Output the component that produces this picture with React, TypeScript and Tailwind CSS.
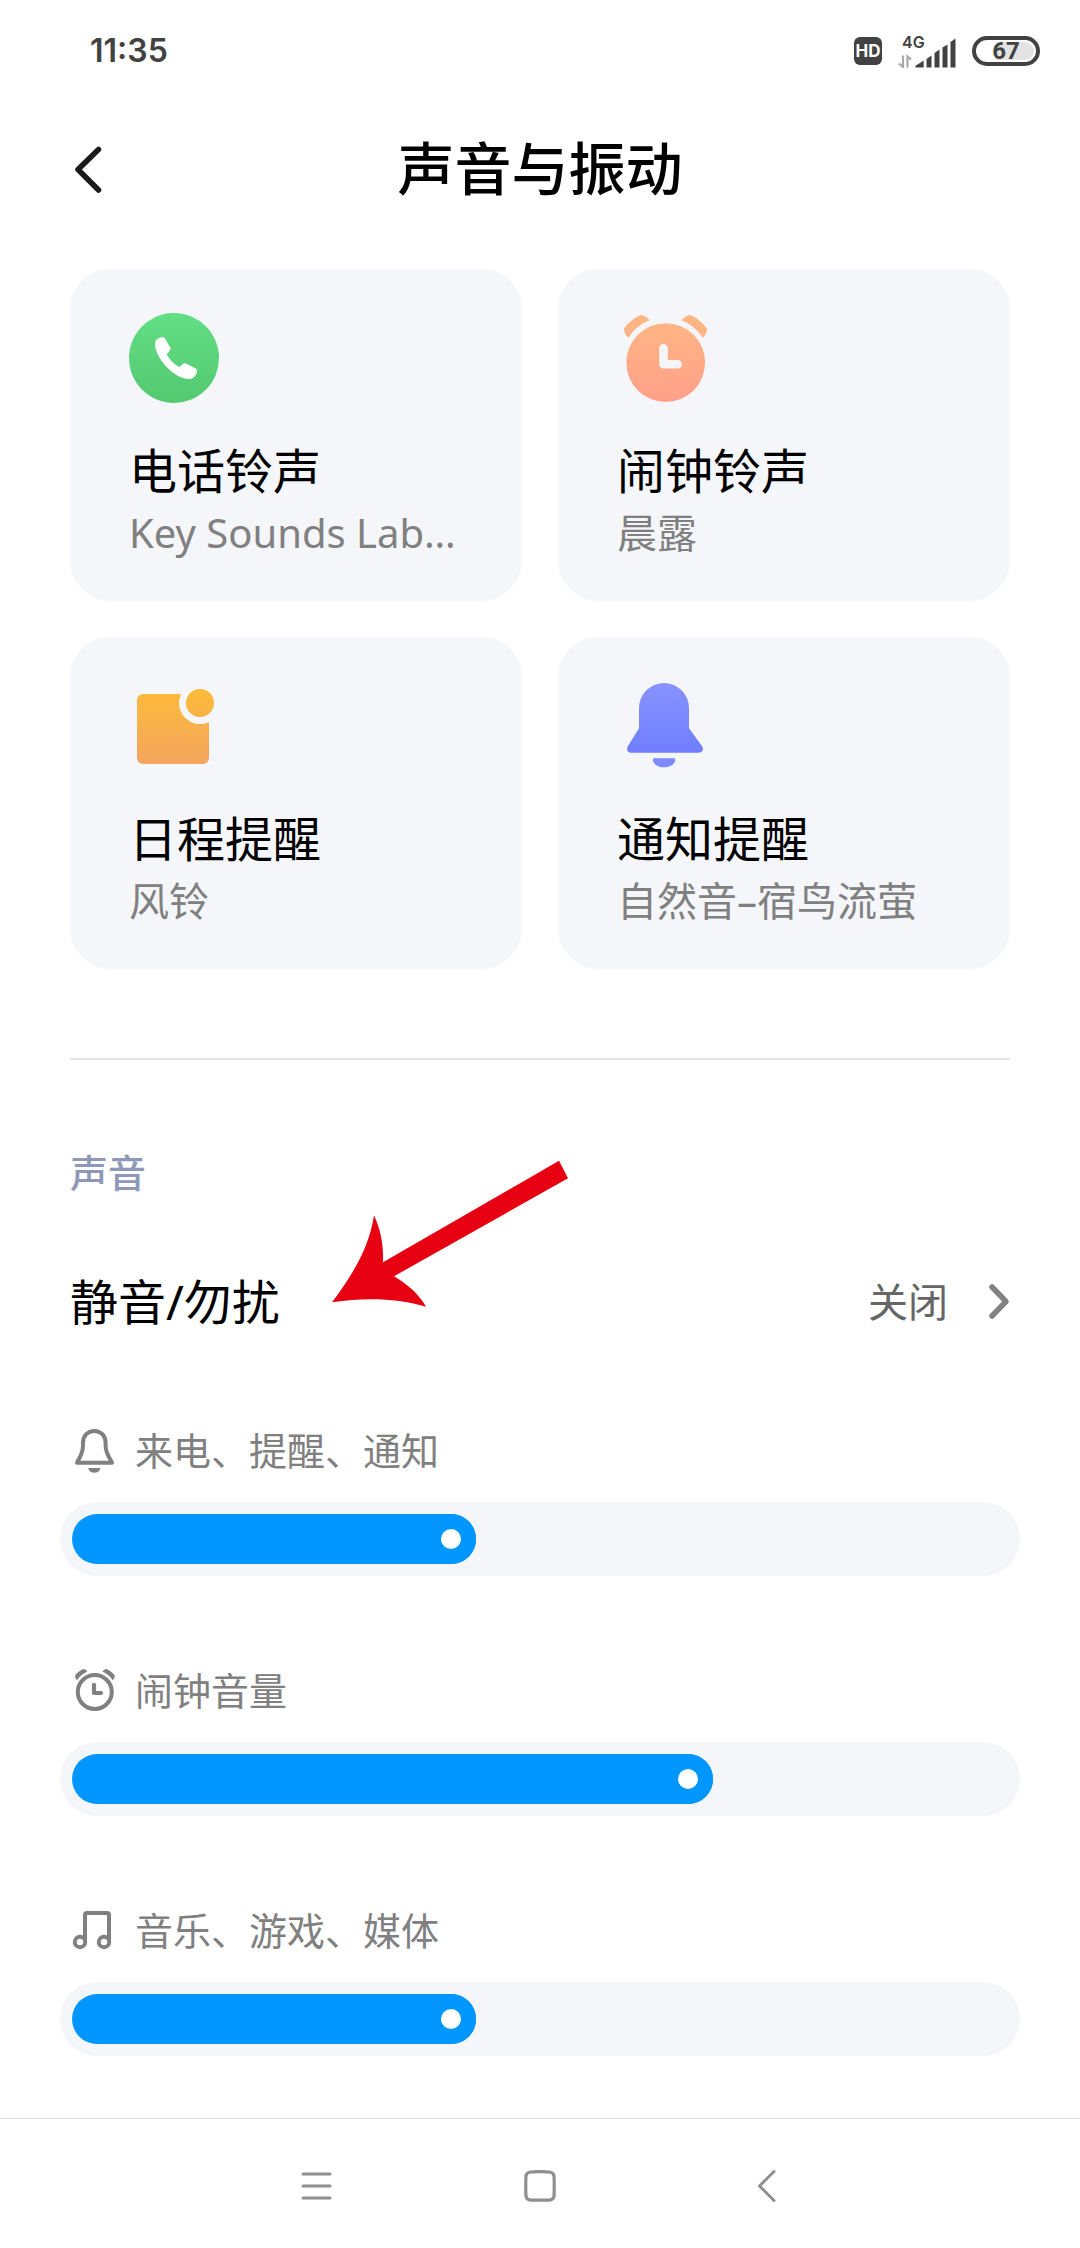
import { useState, type ReactNode } from "react";

function PhoneIcon() {
  return (
    <svg className="size-[90px]" viewBox="0 0 90 90" aria-hidden="true">
      <defs>
        <linearGradient id="phone" x1="0" y1="0" x2="0" y2="1">
          <stop offset="0" stopColor="#62de84" />
          <stop offset="1" stopColor="#54c970" />
        </linearGradient>
      </defs>
      <circle cx="45" cy="45" r="45" fill="url(#phone)" />
      <path
        d="M26 31C26 27 29 25.4 32 24.3Q34.8 23.3 36 25.5L41.3 34.5Q42 36 41 37.2L37.7 41.5C40.5 46.5 45.5 51.5 50.5 54L54.5 50.6Q55.7 49.8 57 50.4L66.5 55.3Q69 57 67.8 59.7C66.5 63 64 66 60 66C44 65.5 26 44 26 31Z"
        fill="#fff"
      />
    </svg>
  );
}

function AlarmIcon() {
  return (
    <svg className="size-[90px]" viewBox="0 0 90 90" aria-hidden="true">
      <defs>
        <linearGradient id="alarm" gradientUnits="userSpaceOnUse" x1="0" y1="2" x2="0" y2="89">
          <stop offset="0" stopColor="#ffb783" />
          <stop offset="1" stopColor="#ffa08a" />
        </linearGradient>
      </defs>
      <g fill="url(#alarm)">
        <circle cx="48.7" cy="49.6" r="39.4" />
        <path d="M7 15.5C11 10 17 5 22.5 2.4Q24.5 1.6 26.3 2.5C29 3.7 31 5.3 32.7 7.3C24 10.5 17 16 11.5 24.8C8.7 22.5 7 19 7 15.5Z" />
        <path d="M90 15.5C86 10 80 5 74.5 2.4Q72.5 1.6 70.7 2.5C68 3.7 66 5.3 64.3 7.3C73 10.5 80 16 85.5 24.8C88.3 22.5 90 19 90 15.5Z" />
      </g>
      <path d="M46.5 35.3V51.3H60.7" fill="none" stroke="#f5f6fa" strokeWidth="8.6" strokeLinecap="round" strokeLinejoin="round" />
    </svg>
  );
}

function CalendarIcon() {
  return (
    <svg className="size-[90px]" viewBox="0 0 90 90" aria-hidden="true">
      <defs>
        <linearGradient id="calendar" gradientUnits="userSpaceOnUse" x1="0" y1="8" x2="0" y2="83">
          <stop offset="0" stopColor="#fcbb38" />
          <stop offset="1" stopColor="#f4a560" />
        </linearGradient>
      </defs>
      <rect x="8" y="13" width="72" height="70" rx="6" fill="url(#calendar)" />
      <circle cx="71" cy="22" r="21" fill="#f5f6fa" />
      <circle cx="71" cy="22" r="14" fill="url(#calendar)" />
    </svg>
  );
}

function BellIcon() {
  return (
    <svg className="size-[90px]" viewBox="0 0 90 90" aria-hidden="true">
      <defs>
        <linearGradient id="bell" x1="0" y1="0" x2="0" y2="1">
          <stop offset="0" stopColor="#8893ff" />
          <stop offset="1" stopColor="#6f7eff" />
        </linearGradient>
      </defs>
      <path
        d="M22 27a25 25 0 0 1 50 0V47.3L85.3 65.5Q86.8 68 85.3 70.3Q84 71.7 82 71.7H14Q12 71.7 10.7 70.2Q9.4 68 10.7 65.5L22 47.3Z"
        fill="url(#bell)"
      />
      <path d="M37 77.3H57.3Q58.6 77.5 58.3 79.5C57.3 83.5 53 86.3 47 86.3C41 86.3 37 83.5 35.8 79.5Q35.5 77.5 37 77.3Z" fill="#7d8bff" />
    </svg>
  );
}

function SmallBellIcon() {
  return (
    <svg className="size-12" viewBox="0 0 48 48" aria-hidden="true">
      <path
        d="M13 15C13 7.5 18 3 24.3 3S35.6 7.5 35.6 15V17.5C35.6 25.5 39 28.5 42 34.7H7C10 28.5 13 25.5 13 17.5Z"
        fill="none"
        stroke="#808080"
        strokeWidth="4"
        strokeLinejoin="round"
      />
      <path d="M18.3 40H30.3C30 43 27.5 44.7 24.3 44.7S18.6 43 18.3 40Z" fill="#808080" />
    </svg>
  );
}

function SmallAlarmIcon() {
  return (
    <svg className="size-12" viewBox="0 0 48 48" aria-hidden="true">
      <circle cx="24.8" cy="24" r="17" fill="none" stroke="#808080" strokeWidth="4" />
      <path d="M5 7.5C7.5 4.5 10.5 2 13.5 1Q16 1.3 17.3 3.5C13 5.5 9.5 8.5 7 12.3Q4.8 10 5 7.5Z" fill="#808080" />
      <path d="M44.8 7.5C42.3 4.5 39.3 2 36.3 1Q33.8 1.3 32.5 3.5C36.8 5.5 40.3 8.5 42.8 12.3Q45 10 44.8 7.5Z" fill="#808080" />
      <path d="M24 16.8V25H31" fill="none" stroke="#808080" strokeWidth="4.2" strokeLinecap="round" strokeLinejoin="round" />
    </svg>
  );
}

function SmallMusicIcon() {
  return (
    <svg className="size-12" viewBox="0 0 48 48" fill="none" stroke="#808080" strokeWidth="4" aria-hidden="true">
      <circle cx="10" cy="34" r="5.2" />
      <circle cx="34" cy="34" r="5.2" />
      <path d="M15 34V7Q15 5 17 5H37Q39 5 39 7V34" />
    </svg>
  );
}

function StatusBar() {
  return (
    <div className="flex h-[102px] items-center justify-between pr-10 pl-[90px] text-[#424242]">
      <time className="font-['Inter',sans-serif] text-[32px] font-semibold">11:35</time>
      <div className="flex items-center gap-4">
        <span className="flex size-7 items-center justify-center rounded-md bg-[#424242] font-['Inter',sans-serif] text-[17px] leading-none font-bold text-white">
          HD
        </span>
        <div className="flex w-[58px] flex-col">
          <span className="pl-1 font-['Inter',sans-serif] text-base leading-4 font-semibold">4G</span>
          <svg className="-mt-3 h-[30px] w-[58px]" viewBox="0 0 58 30" aria-hidden="true">
            <g fill="#424242">
              <path d="M17.5 29.5Q17 28.5 18 27.5L25.7 22.5V29.5Z" />
              <path d="M28.5 21L33.5 17.5V29.5H28.5Z" />
              <path d="M36.5 15L41.5 11.5V29.5H36.5Z" />
              <path d="M44.5 9.5L49.5 6.5V29.5H44.5Z" />
              <path d="M52.5 4L57.5 .5V29.5H52.5Z" />
            </g>
            <path d="M5 17.5V29L.8 25.5M9.5 29.5V18.5L13 21.5" fill="none" stroke="#aaa" strokeWidth="2.2" />
          </svg>
        </div>
        <div className="relative flex h-[30px] w-[68px] items-center justify-center rounded-full border-4 border-[#424242]">
          <span className="absolute inset-y-[2px] right-[2px] w-[38px] rounded-r-full bg-[#e3e3e3]" />
          <span className="relative font-['Roboto',sans-serif] text-2xl leading-none font-bold">67</span>
        </div>
      </div>
    </div>
  );
}

function SoundCard({ icon, title, value }: { icon: ReactNode; title: string; value: string }) {
  return (
    <button type="button" className="flex flex-col items-start rounded-[40px] bg-[#f5f6fa] pt-11 pb-11 pl-[59px] text-left">
      {icon}
      <span className="mt-[38px] text-[48px] leading-[60px] text-black">{title}</span>
      <span className="mt-2 text-[40px] leading-[48px] whitespace-nowrap text-[#808080]">{value}</span>
    </button>
  );
}

const MAX_VOLUME = 15;

function VolumeSlider({ id, icon, label, initial }: { id: string; icon: ReactNode; label: string; initial: number }) {
  const [volume, setVolume] = useState(initial);
  return (
    <div>
      <label htmlFor={id} className="flex h-12 items-center gap-[17px] text-[38px] leading-[44px] text-[#808080]">
        {icon}
        <span className="pb-1">{label}</span>
      </label>
      <div className="-mx-[10px] mt-[26px] rounded-full bg-[#f5f6fa] p-3">
        <div className="relative h-[50px]">
          <div
            className="h-full rounded-full bg-[#0096ff]"
            style={{ width: `calc(50px + (100% - 50px) * ${volume / MAX_VOLUME})` }}
          />
          <input
            id={id}
            type="range"
            min={0}
            max={MAX_VOLUME}
            value={volume}
            onChange={(e) => setVolume(Number(e.target.value))}
            className="absolute inset-0 h-full w-full cursor-pointer appearance-none bg-transparent [&::-webkit-slider-thumb]:size-[50px] [&::-webkit-slider-thumb]:appearance-none [&::-webkit-slider-thumb]:rounded-full [&::-webkit-slider-thumb]:border-[15px] [&::-webkit-slider-thumb]:border-[#0096ff] [&::-webkit-slider-thumb]:bg-white"
          />
        </div>
      </div>
    </div>
  );
}

function PointerArrow() {
  return (
    <svg className="pointer-events-none absolute top-[-112px] left-[260px] h-[150px] w-[240px]" viewBox="0 0 240 150" aria-hidden="true">
      <path
        d="M2 142.300C20 118 39 90 44 55.300C51 71 53.500 84 53 102.300L229 .7L238 18.300L64 116.300C77 124 89 134 96 146.700C66 138 35 137.500 2 142.300Z"
        fill="#e60012"
      />
    </svg>
  );
}

export default function App() {
  return (
    <div className="flex min-h-screen flex-col bg-white font-['Noto_Sans','Noto_Sans_CJK_SC',sans-serif]">
      <StatusBar />
      <header className="grid h-[136px] grid-cols-[1fr_auto_1fr] items-center px-[70px]">
        <button type="button" aria-label="返回" className="justify-self-start">
          <svg className="h-[52px] w-[36px]" viewBox="0 0 36 52" fill="none" aria-hidden="true">
            <path d="M28.5 5.5L8 25.5L28.5 46" stroke="#1a1a1a" strokeWidth="5.5" strokeLinecap="round" strokeLinejoin="round" />
          </svg>
        </button>
        <h1 className="pb-1 text-[57px] leading-[72px] font-medium text-black">声音与振动</h1>
      </header>

      <main className="px-[70px] pt-[31px] pb-[62px]">
        <section className="grid grid-cols-2 gap-9">
          <SoundCard icon={<PhoneIcon />} title="电话铃声" value="Key Sounds Lab…" />
          <SoundCard icon={<AlarmIcon />} title="闹钟铃声" value="晨露" />
          <SoundCard icon={<CalendarIcon />} title="日程提醒" value="风铃" />
          <SoundCard icon={<BellIcon />} title="通知提醒" value="自然音–宿鸟流萤" />
        </section>

        <hr className="mt-[89px] border-t-2 border-[#e4e4e4]" />

        <section className="mt-[88px]">
          <h2 className="text-[38px] leading-[48px] font-medium text-[#8f98b8]">声音</h2>
          <div className="relative mt-[76px]">
            <button type="button" className="flex w-full items-center justify-between text-left">
              <span className="text-[48px] leading-[60px] text-black">静音/勿扰</span>
              <span className="flex items-center gap-10 text-[40px] leading-[48px] text-[#666]">
                关闭
                <svg className="h-[38px] w-[22px]" viewBox="0 0 22 38" fill="none" aria-hidden="true">
                  <path d="M4 4L18 18.5L4 33" stroke="#828282" strokeWidth="5.5" strokeLinecap="round" strokeLinejoin="round" />
                </svg>
              </span>
            </button>
            <PointerArrow />
          </div>
          <div className="mt-24 flex flex-col gap-[92px]">
            <VolumeSlider id="ring" icon={<SmallBellIcon />} label="来电、提醒、通知" initial={6} />
            <VolumeSlider id="alarm-volume" icon={<SmallAlarmIcon />} label="闹钟音量" initial={10} />
            <VolumeSlider id="media" icon={<SmallMusicIcon />} label="音乐、游戏、媒体" initial={6} />
          </div>
        </section>
      </main>

      <nav className="mt-auto flex h-[130px] items-center justify-center gap-[165px] border-t border-[#dfdfdf] pt-1 text-[#8f8f8f]">
        <button type="button" aria-label="菜单" className="flex w-[60px] justify-center">
          <svg className="size-9" viewBox="0 0 36 36" fill="none" stroke="currentColor" strokeWidth="3" strokeLinecap="round" aria-hidden="true">
            <path d="M6 6H33M6 18H33M6 30H33" />
          </svg>
        </button>
        <button type="button" aria-label="主屏幕" className="flex w-[60px] justify-center">
          <svg className="size-9" viewBox="0 0 36 36" fill="none" stroke="currentColor" strokeWidth="3.2" aria-hidden="true">
            <path d="M18 3.7C23 3.7 26.500 3.8 28.500 4.300C31 4.900 31.600 5.700 32 8C32.300 11 32.300 25 32 28.300C31.600 30.600 31 31.400 28.500 31.800C25 32.300 11 32.300 7.500 31.800C5 31.400 4.400 30.600 4 28.300C3.700 25 3.700 11 4 8C4.400 5.700 5 4.900 7.500 4.300C9.500 3.800 13 3.700 18 3.700Z" />
          </svg>
        </button>
        <button type="button" aria-label="后退" className="flex w-[60px] justify-center">
          <svg className="size-9" viewBox="0 0 36 36" fill="none" stroke="currentColor" strokeWidth="3" strokeLinecap="round" strokeLinejoin="round" aria-hidden="true">
            <path d="M27 3.500L12.500 18L27 32.500" />
          </svg>
        </button>
      </nav>
    </div>
  );
}
